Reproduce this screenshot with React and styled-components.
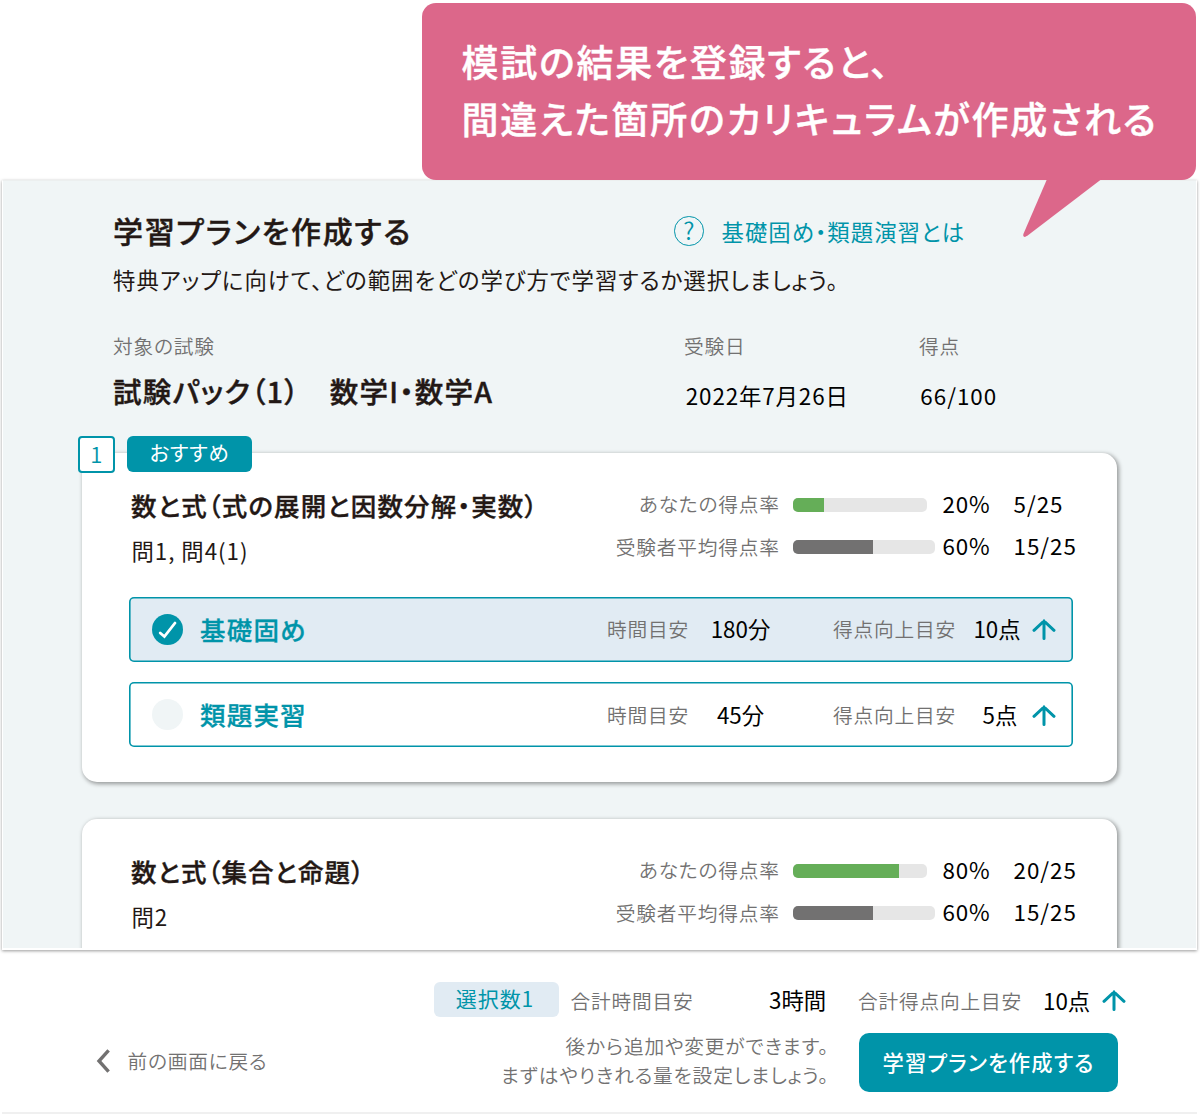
import React from "react";
import styled, { createGlobalStyle } from "styled-components";

const TEAL = "#0094a9";
const INK = "#231815";
const MUTED = "#727171";

const GlobalStyle = createGlobalStyle`
  * { box-sizing: border-box; }
  body {
    margin: 0;
    background: #fff;
    font-family: "Noto Sans CJK JP", sans-serif;
    font-feature-settings: "palt";
    color: ${INK};
  }
  h1, h2, h3, p { margin: 0; }
`;

const Page = styled.div`
  width: 1200px;
  height: 1120px;
  overflow: hidden;
`;

/* ---------- callout ---------- */

const CalloutArea = styled.header`
  display: flex;
  justify-content: flex-end;
  height: 180px;
  padding: 3px 4px 0 0;
`;

const Callout = styled.div`
  position: relative;
  z-index: 2;
  width: 774px;
  height: 176.5px;
  padding: 30px 0 0 39.5px;
  border-radius: 14px;
  background: #dc678a;
  color: #fff;
  font-size: 37px;
  font-weight: 500;
  line-height: 57px;
  white-space: nowrap;
  -webkit-text-stroke: 0.4px currentColor;
`;

const CalloutLine = styled.p`
  letter-spacing: ${(p) => p.$ls}px;
`;

const CalloutTail = styled.svg`
  position: absolute;
  left: 600px;
  top: 175px;
`;

/* ---------- shared text ---------- */

const Label = styled.span`
  color: ${MUTED};
  font-size: 19.7px;
  font-weight: 350;
  line-height: 30px;
  letter-spacing: ${(p) => p.$ls ?? 0.8}px;
  white-space: nowrap;
`;

const Value = styled.span`
  padding-bottom: 2px;
  color: #000;
  font-size: 22.4px;
  line-height: 30px;
  letter-spacing: ${(p) => p.$ls ?? 0}px;
  white-space: nowrap;
`;

/* ---------- main panel ---------- */

const Panel = styled.main`
  width: 1195px;
  height: 770px;
  margin-left: 2px;
  padding-top: 29px;
  overflow: hidden;
  border: 1px solid #fff;
  border-top-color: #ecefef;
  border-bottom-width: 2px;
  background: #f0f5f6;
  box-shadow: 0 1px 3px rgba(0, 0, 0, 0.4);
`;

const Intro = styled.div`
  padding-left: 110px;
`;

const HeadRow = styled.div`
  display: flex;
  align-items: center;
  height: 40px;
`;

const Title = styled.h1`
  width: 561px;
  font-size: 30px;
  font-weight: 500;
  line-height: 40px;
  letter-spacing: 1.7px;
  -webkit-text-stroke: 0.4px currentColor;
`;

const HelpLink = styled.a`
  display: flex;
  align-items: center;
  gap: 18px;
  padding-top: 2px;
  color: ${TEAL};
  font-size: 22.4px;
  line-height: 30px;
  letter-spacing: 1.03px;
  white-space: nowrap;
`;

const HelpMark = styled.span`
  width: 29.5px;
  height: 29.5px;
  border: 1.4px solid ${TEAL};
  border-radius: 50%;
  font-size: 24px;
  font-weight: 350;
  line-height: 26px;
  letter-spacing: 0;
  text-align: center;
`;

const Lead = styled.p`
  margin-top: 13.6px;
  font-size: 22.4px;
  line-height: 30px;
  letter-spacing: 1px;
  white-space: nowrap;
`;

const ExamGrid = styled.div`
  display: grid;
  grid-template-columns: 571px 235px 1fr;
  margin-top: 37.8px;
`;

const ExamItem = styled.div`
  display: flex;
  flex-direction: column;
  gap: 9.6px;
  height: 79.6px;
`;

const ExamName = styled.h2`
  font-size: 28.5px;
  font-weight: 500;
  line-height: 40px;
  letter-spacing: 1.28px;
  white-space: pre;
  -webkit-text-stroke: 0.4px currentColor;
`;

const ExamValue = styled(Value)`
  line-height: 48px;
  padding-left: ${(p) => p.$pad}px;
`;

/* ---------- unit card ---------- */

const Card = styled.section`
  position: relative;
  width: 1035px;
  height: 329px;
  margin: ${(p) => p.$top}px 0 0 79px;
  padding-top: 29.5px;
  border-radius: 15px;
  background: #fff;
  box-shadow: 1.5px 1.5px 4px rgba(0, 0, 0, 0.38);
`;

const Tags = styled.div`
  position: absolute;
  left: -4.5px;
  top: -17px;
  display: flex;
  gap: 12px;
`;

const RankTag = styled.span`
  width: 37.5px;
  height: 37px;
  border: 2px solid ${TEAL};
  border-radius: 4px;
  background: #fff;
  color: ${TEAL};
  font-size: 22px;
  font-weight: 350;
  line-height: 31px;
  text-align: center;
`;

const RecommendTag = styled.span`
  width: 125px;
  height: 36px;
  border-radius: 6px;
  background: ${TEAL};
  color: #fff;
  font-size: 20.5px;
  line-height: 33px;
  letter-spacing: 0.6px;
  text-align: center;
`;

const CardHead = styled.div`
  display: flex;
  height: 114.5px;
  padding-left: 49px;
`;

const UnitInfo = styled.div`
  display: flex;
  flex-direction: column;
  gap: 13px;
  width: 480px;
  padding-top: 5.5px;
`;

const UnitTitle = styled.h3`
  font-size: 25.5px;
  font-weight: 500;
  line-height: 34px;
  letter-spacing: ${(p) => p.$ls}px;
  white-space: nowrap;
  -webkit-text-stroke: 0.35px currentColor;
`;

const Questions = styled.p`
  padding-left: 0.5px;
  font-size: 22.4px;
  line-height: 30px;
  letter-spacing: 0.95px;
`;

const Stats = styled.div`
  display: grid;
  grid-template-columns: 182.3px 149.2px 71px 80px;
  grid-auto-rows: 42.6px;
  align-items: center;
`;

const StatLabel = styled(Label)`
  padding-right: 13.6px;
  padding-top: 0.6px;
  text-align: right;
`;

const Track = styled.div`
  width: ${(p) => p.$w}px;
  height: 14px;
  margin-top: 2px;
  overflow: hidden;
  border-radius: 5px;
  background: #e6e6e6;
`;

const Fill = styled.div`
  width: ${(p) => p.$w}px;
  height: 100%;
  background: ${(p) => p.$c};
`;

const Options = styled.div`
  display: flex;
  flex-direction: column;
  gap: 20.5px;
  margin-left: 47px;
`;

const Option = styled.div`
  display: flex;
  align-items: center;
  width: 943.5px;
  height: 65px;
  padding-left: 23px;
  border-radius: 5px;
  background: ${(p) => (p.$on ? "#e1ebf3" : "#fff")};
  box-shadow: inset 0 0 0 1.6px ${TEAL};
`;

const Radio = styled.span`
  display: flex;
  width: 31px;
  height: 31px;
  margin-right: 17px;
  border-radius: 50%;
  background: ${(p) => (p.$on ? TEAL : "#f0f5f6")};
`;

const OptionName = styled.span`
  width: 407px;
  padding-bottom: 1.4px;
  color: ${TEAL};
  font-size: 25.5px;
  font-weight: 500;
  line-height: 34px;
  letter-spacing: 1.2px;
  -webkit-text-stroke: 0.3px currentColor;
`;

const TimeLabel = styled(Label)`
  width: 92.5px;
`;

const TimeValue = styled(Value)`
  width: 82px;
  margin-right: 51.5px;
  text-align: center;
`;

const GainLabel = styled(Label)`
  width: 132px;
`;

const GainValue = styled(Value)`
  width: 64px;
  padding-left: ${(p) => p.$shift}px;
  margin-right: 3px;
  text-align: center;
`;

/* ---------- footer ---------- */

const Footer = styled.footer`
  display: flex;
  width: 1195px;
  height: 164px;
  margin-left: 2px;
  border-bottom: 2px solid #f0f0f0;
`;

const BackLink = styled.a`
  display: flex;
  align-items: center;
  gap: 17.5px;
  width: 432px;
  height: 30px;
  margin-top: 95.5px;
  padding-left: 94px;
`;

const Summary = styled.div`
  display: flex;
  flex-direction: column;
  padding-top: 29px;
`;

const TotalRow = styled.div`
  display: flex;
  align-items: center;
  height: 42px;
`;

const CountTag = styled.span`
  width: 125px;
  height: 35px;
  margin: 0 11.5px 1px 0;
  padding-right: 3px;
  border-radius: 6px;
  background: #e1ebf3;
  color: ${TEAL};
  font-size: 21px;
  line-height: 33px;
  letter-spacing: 0.9px;
  text-align: center;
`;

const TotalTime = styled(Value)`
  width: 89px;
  padding-bottom: 3px;
`;

const TotalLabel = styled(Label)`
  width: ${(p) => p.$w}px;
  padding-top: 2px;
`;

const TotalGain = styled(Value)`
  width: 58.5px;
  padding-bottom: 0;
`;

const ActionRow = styled.div`
  display: flex;
  gap: 28px;
  margin-top: 11px;
`;

const Notes = styled.div`
  display: flex;
  flex-direction: column;
  align-items: flex-end;
  width: 397px;
  padding-right: 2px;
`;

const Note = styled(Label)`
  line-height: 28.7px;
`;

const Submit = styled.button`
  width: 259px;
  height: 59px;
  margin-top: 1px;
  padding: 0 0 1px;
  border: 0;
  border-radius: 10px;
  background: ${TEAL};
  color: #fff;
  font: 500 21.3px/30px "Noto Sans CJK JP", sans-serif;
  font-feature-settings: "palt";
  letter-spacing: 1.2px;
`;

const Svg = styled.svg`
  display: block;
  flex: none;
`;

const ArrowUp = () => (
  <Svg width="24" height="24" viewBox="0 0 24 24" fill="none" stroke={TEAL} strokeWidth="3" strokeLinecap="round">
    <path d="M12 4V21.4M2 13.3L12 4L22 13.3" />
  </Svg>
);

const Check = () => (
  <Svg width="31" height="31" viewBox="0 0 31 31" fill="none" stroke="#fff" strokeWidth="2.8" strokeLinecap="round">
    <path d="M8.2 19L12.4 22.6L23 9" />
  </Svg>
);

function StatRow({ label, track, fill, color, rate, score }) {
  return (
    <>
      <StatLabel>{label}</StatLabel>
      <Track $w={track}>
        <Fill $w={fill} $c={color} />
      </Track>
      <Value $ls={0.8}>{rate}</Value>
      <Value $ls={1}>{score}</Value>
    </>
  );
}

function UnitHead({ title, ls, questions, fill, rate, score }) {
  return (
    <CardHead>
      <UnitInfo>
        <UnitTitle $ls={ls}>{title}</UnitTitle>
        <Questions>{questions}</Questions>
      </UnitInfo>
      <Stats>
        <StatRow label="あなたの得点率" track={134} fill={fill} color="#65ae58" rate={rate} score={score} />
        <StatRow label="受験者平均得点率" track={141.5} fill={79.5} color={MUTED} rate="60%" score="15/25" />
      </Stats>
    </CardHead>
  );
}

function StudyOption({ name, on, time, gain, shift }) {
  return (
    <Option $on={on}>
      <Radio $on={on}>{on && <Check />}</Radio>
      <OptionName>{name}</OptionName>
      <TimeLabel>時間目安</TimeLabel>
      <TimeValue>{time}</TimeValue>
      <GainLabel>得点向上目安</GainLabel>
      <GainValue $shift={shift}>{gain}</GainValue>
      <ArrowUp />
    </Option>
  );
}

export default function App() {
  return (
    <Page>
      <GlobalStyle />
      <CalloutArea>
        <Callout>
          <CalloutLine $ls={1.75}>模試の結果を登録すると、</CalloutLine>
          <CalloutLine $ls={1.8}>間違えた箇所のカリキュラムが作成される</CalloutLine>
          <CalloutTail width="80" height="62" viewBox="0 0 80 62">
            <path
              d="M25.5 0L1.4 56Q0.8 59.4 3.4 58.8L6 57.3L81 0Z"
              fill="#dc678a"
            />
          </CalloutTail>
        </Callout>
      </CalloutArea>

      <Panel>
        <Intro>
          <HeadRow>
            <Title>学習プランを作成する</Title>
            <HelpLink>
              <HelpMark>?</HelpMark>
              基礎固め・類題演習とは
            </HelpLink>
          </HeadRow>
          <Lead>特典アップに向けて、どの範囲をどの学び方で学習するか選択しましょう。</Lead>
          <ExamGrid>
            <ExamItem>
              <Label>対象の試験</Label>
              <ExamName>試験パック（1）　数学I・数学A</ExamName>
            </ExamItem>
            <ExamItem>
              <Label>受験日</Label>
              <ExamValue $ls={0.88} $pad={1.8}>2022年7月26日</ExamValue>
            </ExamItem>
            <ExamItem>
              <Label>得点</Label>
              <ExamValue $ls={1} $pad={1.3}>66/100</ExamValue>
            </ExamItem>
          </ExamGrid>
        </Intro>

        <Card $top={42}>
          <Tags>
            <RankTag>1</RankTag>
            <RecommendTag>おすすめ</RecommendTag>
          </Tags>
          <UnitHead
            title="数と式（式の展開と因数分解・実数）"
            ls={1.12}
            questions="問1, 問4(1)"
            fill={30.5}
            rate="20%"
            score="5/25"
          />
          <Options>
            <StudyOption name="基礎固め" on time="180分" gain="10点" shift={0} />
            <StudyOption name="類題実習" time="45分" gain="5点" shift={6} />
          </Options>
        </Card>

        <Card $top={37}>
          <UnitHead title="数と式（集合と命題）" ls={1.05} questions="問2" fill={106} rate="80%" score="20/25" />
        </Card>
      </Panel>

      <Footer>
        <BackLink>
          <Svg width="14" height="24" viewBox="0 0 14 24" fill="none" stroke={MUTED} strokeWidth="3.4">
            <path d="M12.6 1.4L3 12L12.6 22.6" />
          </Svg>
          <Label>前の画面に戻る</Label>
        </BackLink>
        <Summary>
          <TotalRow>
            <CountTag>選択数1</CountTag>
            <TotalLabel $w={198.5}>合計時間目安</TotalLabel>
            <TotalTime>3時間</TotalTime>
            <TotalLabel $w={185}>合計得点向上目安</TotalLabel>
            <TotalGain>10点</TotalGain>
            <ArrowUp />
          </TotalRow>
          <ActionRow>
            <Notes>
              <Note $ls={0.85}>後から追加や変更ができます。</Note>
              <Note $ls={0.85}>まずはやりきれる量を設定しましょう。</Note>
            </Notes>
            <Submit>学習プランを作成する</Submit>
          </ActionRow>
        </Summary>
      </Footer>
    </Page>
  );
}
